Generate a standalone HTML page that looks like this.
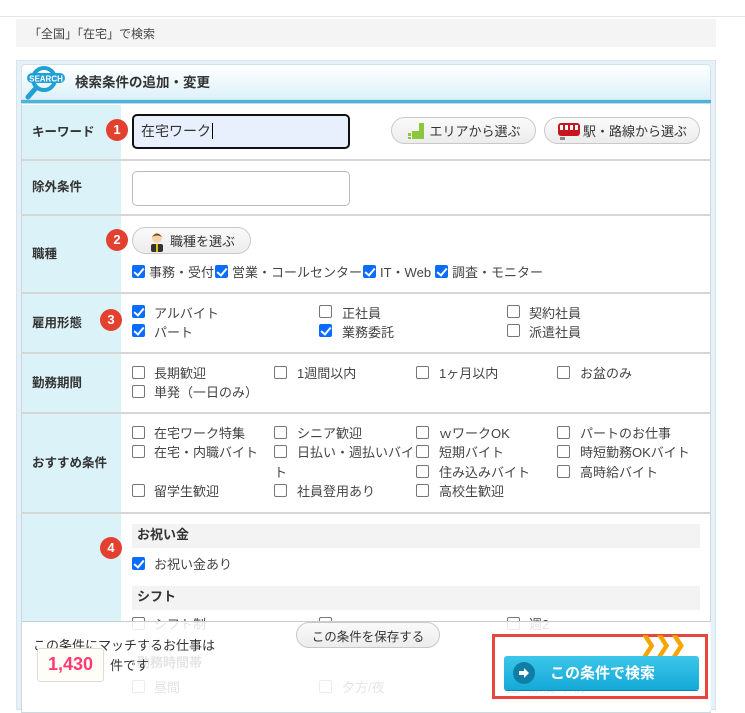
<!DOCTYPE html>
<html><head><meta charset="utf-8"><style>
*{margin:0;padding:0;box-sizing:border-box}
body{width:745px;height:704px;overflow:hidden;background:#fff;font-family:"Liberation Sans","Noto Sans CJK JP",sans-serif;color:#333;font-size:13px;position:relative}
.a{position:absolute;white-space:nowrap}
.cb{position:absolute;width:13px;height:13px;border:1px solid #767676;border-radius:2px;background:#fff}
.cb.on{background:#0a6cff;border-color:#0a6cff}
.cb.on:after{content:"";position:absolute;left:3px;top:0px;width:4px;height:8px;border:solid #fff;border-width:0 2px 2px 0;transform:rotate(40deg)}
.lbl{position:absolute;left:22px;width:99px;background:#dcf2f9;font-weight:bold;font-size:12.5px;color:#333;display:flex;align-items:center;padding-left:10px;padding-bottom:4px}
.hr{position:absolute;left:22px;width:689px;height:2px;background:#d6d6d6}
.badge{position:absolute;width:22px;height:22px;border-radius:50%;background:#e2412f;color:#fff;font-weight:bold;font-size:13px;text-align:center;line-height:22px}
.pill{position:absolute;border:1px solid #c8c8c8;border-radius:14px;background:linear-gradient(#fafafa,#ececec);font-size:13px;color:#333;display:flex;align-items:center;justify-content:center}
.t{position:absolute;white-space:nowrap;font-size:13px;color:#444;margin-top:-2px}
.sec{position:absolute;left:132px;width:568px;height:24px;background:#f3f3f3;font-weight:bold;font-size:13px;padding-left:5px;line-height:22px}
</style></head><body>
<div class="a" style="left:0;top:16px;width:745px;height:1px;background:#e4e4e4"></div>
<div class="a" style="left:16px;top:19px;width:700px;height:28px;background:#f4f4f4;font-size:12px;color:#444;padding:6px 0 0 13px">「全国」「在宅」で検索</div>
<div class="a" style="left:16px;top:60px;width:700px;height:650px;background:#e6f1f7;border:1px solid #d5e6ef"></div>
<div class="a" style="left:21px;top:64px;width:690px;height:36px;border:1px solid #cfe3ee;border-radius:4px 4px 0 0;background:linear-gradient(#fff,#ddf1f9)"></div>
<div class="a" style="left:21px;top:100px;width:690px;height:3px;background:#48b5dc"></div>
<div class="a" style="left:21px;top:103px;width:690px;height:610px;background:#fff;border:1px solid #cfd8dd"></div>
<svg class="a" style="left:24px;top:64px" width="46" height="36" viewBox="0 0 46 36"><circle cx="20" cy="15" r="11" fill="none" stroke="#22a0d6" stroke-width="4"/><line x1="12" y1="24" x2="4" y2="33" stroke="#22a0d6" stroke-width="5" stroke-linecap="round"/><rect x="3" y="9" width="38" height="10" rx="5" fill="#22a0d6"/><text x="22" y="17.5" font-size="8" font-weight="bold" fill="#fff" text-anchor="middle" font-family="Liberation Sans">SEARCH</text></svg>
<div class="a" style="left:75px;top:71px;font-size:13.5px;font-weight:bold;color:#333">検索条件の追加・変更</div>
<div class="lbl" style="top:105px;height:54px">キーワード</div>
<div class="hr" style="top:159px"></div>
<div class="lbl" style="top:161px;height:53px">除外条件</div>
<div class="hr" style="top:214px"></div>
<div class="lbl" style="top:216px;height:76px">職種</div>
<div class="hr" style="top:292px"></div>
<div class="lbl" style="top:294px;height:58px">雇用形態</div>
<div class="hr" style="top:352px"></div>
<div class="lbl" style="top:354px;height:58px">勤務期間</div>
<div class="hr" style="top:412px"></div>
<div class="lbl" style="top:414px;height:98px">おすすめ条件</div>
<div class="hr" style="top:512px"></div>
<div class="lbl" style="top:514px;height:110px"></div>
<div class="badge" style="left:106px;top:119px">1</div>
<div class="badge" style="left:106px;top:229px">2</div>
<div class="badge" style="left:100px;top:309px">3</div>
<div class="badge" style="left:100px;top:537px">4</div>
<div class="a" style="left:132px;top:114px;width:218px;height:35px;border:2px solid #111;border-radius:5px;background:#e8f0fe;font-size:14px;padding:5px 0 0 7px">在宅ワーク<span style="border-left:1px solid #000;margin-left:1px"></span></div>
<div class="pill" style="left:391px;top:117px;width:145px;height:27px"><svg width="20" height="20" viewBox="0 0 20 20" style="margin-right:3px"><rect x="13" y="2" width="5" height="16" fill="#8cc63f"/><rect x="6" y="10" width="7" height="8" fill="#8cc63f"/><rect x="2" y="12" width="3" height="3" fill="#8cc63f"/><rect x="2" y="16" width="3" height="2" fill="#8cc63f"/></svg>エリアから選ぶ</div>
<div class="pill" style="left:544px;top:117px;width:156px;height:27px"><svg width="24" height="20" viewBox="0 0 24 20" style="margin-right:2px"><rect x="1" y="2" width="22" height="13" rx="3" fill="#c8161d"/><rect x="3" y="4" width="3" height="5" fill="#fff"/><rect x="8" y="4" width="3" height="5" fill="#fff"/><rect x="13" y="4" width="3" height="5" fill="#fff"/><rect x="18" y="4" width="3" height="5" fill="#fff"/><rect x="3" y="16" width="5" height="3" fill="#888"/></svg>駅・路線から選ぶ</div>
<div class="a" style="left:132px;top:171px;width:218px;height:35px;border:1px solid #bbb;border-radius:5px;background:#fff"></div>
<div class="pill" style="left:132px;top:227px;width:119px;height:27px"><svg width="18" height="22" viewBox="0 0 18 22" style="margin-right:4px"><circle cx="9" cy="8" r="5" fill="#f6d2a8"/><path d="M4 7 Q9 0 14 7 Q9 4 4 7Z" fill="#7a4a1e"/><rect x="3" y="14" width="12" height="8" rx="2" fill="#333"/><rect x="8" y="14" width="2" height="8" fill="#e5c000"/></svg>職種を選ぶ</div>
<div class="cb on" style="left:132px;top:265px"></div><div class="t" style="left:149px;top:264px">事務・受付</div>
<div class="cb on" style="left:215px;top:265px"></div><div class="t" style="left:232px;top:264px">営業・コールセンター</div>
<div class="cb on" style="left:363px;top:265px"></div><div class="t" style="left:380px;top:264px">IT・Web</div>
<div class="cb on" style="left:435px;top:265px"></div><div class="t" style="left:452px;top:264px">調査・モニター</div>
<div class="cb on" style="left:132px;top:305px"></div><div class="t" style="left:154px;top:305px">アルバイト</div>
<div class="cb on" style="left:132px;top:324px"></div><div class="t" style="left:154px;top:324px">パート</div>
<div class="cb" style="left:319px;top:305px"></div><div class="t" style="left:342px;top:305px">正社員</div>
<div class="cb on" style="left:319px;top:324px"></div><div class="t" style="left:342px;top:324px">業務委託</div>
<div class="cb" style="left:507px;top:305px"></div><div class="t" style="left:529px;top:305px">契約社員</div>
<div class="cb" style="left:507px;top:324px"></div><div class="t" style="left:529px;top:324px">派遣社員</div>
<div class="cb" style="left:132px;top:366px"></div><div class="t" style="left:154px;top:365px">長期歓迎</div>
<div class="cb" style="left:274px;top:366px"></div><div class="t" style="left:297px;top:365px">1週間以内</div>
<div class="cb" style="left:416px;top:366px"></div><div class="t" style="left:439px;top:365px">1ヶ月以内</div>
<div class="cb" style="left:557px;top:366px"></div><div class="t" style="left:580px;top:365px">お盆のみ</div>
<div class="cb" style="left:132px;top:385px"></div><div class="t" style="left:154px;top:384px">単発（一日のみ）</div>
<div class="cb" style="left:132px;top:426px"></div><div class="t" style="left:154px;top:425px">在宅ワーク特集</div>
<div class="cb" style="left:274px;top:426px"></div><div class="t" style="left:297px;top:425px">シニア歓迎</div>
<div class="cb" style="left:416px;top:426px"></div><div class="t" style="left:439px;top:425px">ｗワークOK</div>
<div class="cb" style="left:557px;top:426px"></div><div class="t" style="left:580px;top:425px">パートのお仕事</div>
<div class="cb" style="left:132px;top:445px"></div><div class="t" style="left:154px;top:444px">在宅・内職バイト</div>
<div class="cb" style="left:274px;top:445px"></div><div class="t" style="left:297px;top:444px">日払い・週払いバイ</div><div class="t" style="left:274px;top:464px">ト</div>
<div class="cb" style="left:416px;top:445px"></div><div class="t" style="left:439px;top:444px">短期バイト</div>
<div class="cb" style="left:557px;top:445px"></div><div class="t" style="left:580px;top:444px">時短勤務OKバイト</div>
<div class="cb" style="left:416px;top:465px"></div><div class="t" style="left:439px;top:464px">住み込みバイト</div>
<div class="cb" style="left:557px;top:465px"></div><div class="t" style="left:580px;top:464px">高時給バイト</div>
<div class="cb" style="left:132px;top:484px"></div><div class="t" style="left:154px;top:483px">留学生歓迎</div>
<div class="cb" style="left:274px;top:484px"></div><div class="t" style="left:297px;top:483px">社員登用あり</div>
<div class="cb" style="left:416px;top:484px"></div><div class="t" style="left:439px;top:483px">高校生歓迎</div>
<div class="sec" style="top:524px">お祝い金</div>
<div class="cb on" style="left:132px;top:557px"></div><div class="t" style="left:154px;top:556px">お祝い金あり</div>
<div class="sec" style="top:586px">シフト</div>
<div class="cb" style="left:132px;top:617px"></div><div class="t" style="left:154px;top:616px">シフト制</div>
<div class="cb" style="left:319px;top:617px"></div>
<div class="cb" style="left:507px;top:617px"></div><div class="t" style="left:529px;top:616px">週2</div>
<div class="t" style="left:137px;top:654px;font-weight:bold">勤務時間帯</div>
<div class="cb" style="left:132px;top:680px"></div><div class="t" style="left:154px;top:679px">昼間</div>
<div class="cb" style="left:319px;top:680px"></div><div class="t" style="left:342px;top:679px">夕方/夜</div>
<div class="cb" style="left:507px;top:680px"></div><div class="t" style="left:529px;top:679px">深夜/早朝</div>
<div class="a" style="left:22px;top:621px;width:689px;height:90px;background:rgba(255,255,255,0.86);border-top:1px solid #ccc"></div>
<div class="t" style="left:33px;top:637px;color:#333">この条件にマッチするお仕事は</div>
<div class="a" style="left:37px;top:648px;width:67px;height:34px;border:1px solid #ddd;border-radius:3px;background:#fffdf8;color:#ff3a6e;font-weight:bold;font-size:18px;text-align:center;line-height:30px">1,430</div>
<div class="t" style="left:110px;top:657px;color:#333">件です</div>
<div class="pill" style="left:296px;top:622px;width:144px;height:26px;font-size:12.5px">この条件を保存する</div>
<div class="a" style="left:492px;top:634px;width:216px;height:65px;border:3px solid #e8463c"></div>
<div class="a" style="left:640px;top:632px;font-size:20px;font-weight:bold;color:#f6a400;letter-spacing:-2px">❯❯❯</div>
<div class="a" style="left:504px;top:656px;width:195px;height:34px;border-radius:3px;background:linear-gradient(#3cc6ea,#13a9d8);box-shadow:0 1px 0 #0e86ad"></div>
<div class="a" style="left:513px;top:662px;width:22px;height:22px;border-radius:50%;background:#0f7ea6"></div>
<svg class="a" style="left:517px;top:666px" width="14" height="14" viewBox="0 0 14 14"><path d="M2 5h5V2l5 5-5 5V9H2z" fill="#fff"/></svg>
<div class="a" style="left:550px;top:662px;color:#fff;font-weight:bold;font-size:15px">この条件で検索</div>
</body></html>
